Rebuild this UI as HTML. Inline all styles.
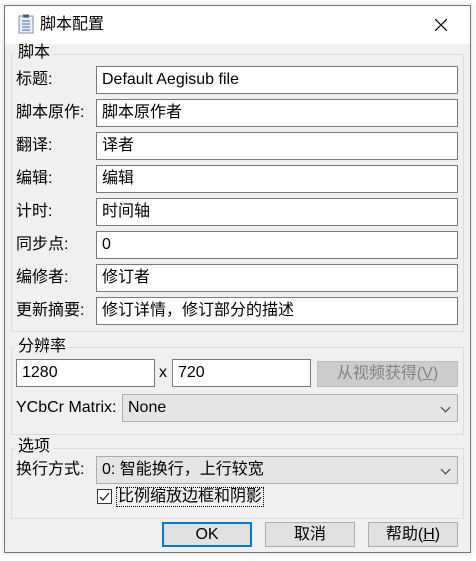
<!DOCTYPE html>
<html><head><meta charset="utf-8"><style>
*{box-sizing:border-box;margin:0;padding:0}
body{width:476px;height:561px;background:#fff;font-family:"Liberation Sans","Noto Sans CJK SC",sans-serif;font-size:16px;color:#000;position:relative;overflow:hidden}
.win{position:absolute;left:4px;top:5px;width:467px;height:548px;border:1px solid #777;background:#f0f0f0;box-shadow:0 0 6px rgba(0,0,0,.15)}
.title{position:absolute;left:0;top:0;width:465px;height:38px;background:#fff}
.a{position:absolute}
.grp{position:absolute;border:1px solid #dcdcdc}
.gl{position:absolute;background:#f0f0f0;padding:0 3px;line-height:18px}
.in{position:absolute;background:#fff;border:1px solid #7a7a7a;height:28px;line-height:26px;padding-left:5px;white-space:nowrap}
.lb{position:absolute;line-height:20px;white-space:nowrap}
.cb{position:absolute;background:#e5e5e5;border:1px solid #adadad;height:28px;line-height:26px;padding-left:5px}
.cb:after{content:"";position:absolute;right:8px;top:9px;width:6px;height:6px;border-right:1px solid #333;border-bottom:1px solid #333;transform:rotate(45deg)}
.bt{position:absolute;background:#e1e1e1;border:1px solid #adadad;height:25px;line-height:23px;text-align:center}
</style></head><body>
<div class="win">
<div class="title">
<svg class="a" style="left:13px;top:8px" width="16" height="20" viewBox="0 0 16 20"><rect x="1" y="2" width="14" height="17" fill="#e8eef6" stroke="#7f8fa6"/><rect x="5" y="0.5" width="6" height="3" fill="#556" /><g stroke="#4a6fa5"><line x1="4" y1="7" x2="12" y2="7"/><line x1="4" y1="10" x2="12" y2="10"/><line x1="4" y1="13" x2="12" y2="13"/><line x1="4" y1="16" x2="12" y2="16"/></g></svg>
<div class="a" style="left:35px;top:9px;line-height:20px">脚本配置</div>
<svg class="a" style="left:430px;top:13px" width="12" height="12"><path d="M0 0L12 12M12 0L0 12" stroke="#000" stroke-width="1.2"/></svg>
</div>
<div class="grp" style="left:6px;top:48px;width:453px;height:278px"></div>
<div class="gl" style="left:10px;top:38px">脚本</div>
<div class="lb" style="left:11px;top:64px">标题:</div><div class="in" style="left:91px;top:60px;width:362px">Default Aegisub file</div>
<div class="lb" style="left:11px;top:97px">脚本原作:</div><div class="in" style="left:91px;top:93px;width:362px">脚本原作者</div>
<div class="lb" style="left:11px;top:130px">翻译:</div><div class="in" style="left:91px;top:126px;width:362px">译者</div>
<div class="lb" style="left:11px;top:163px">编辑:</div><div class="in" style="left:91px;top:159px;width:362px">编辑</div>
<div class="lb" style="left:11px;top:196px">计时:</div><div class="in" style="left:91px;top:192px;width:362px">时间轴</div>
<div class="lb" style="left:11px;top:229px">同步点:</div><div class="in" style="left:91px;top:225px;width:362px">0</div>
<div class="lb" style="left:11px;top:262px">编修者:</div><div class="in" style="left:91px;top:258px;width:362px">修订者</div>
<div class="lb" style="left:11px;top:295px">更新摘要:</div><div class="in" style="left:91px;top:291px;width:362px">修订详情，修订部分的描述</div>
<div class="grp" style="left:6px;top:341px;width:453px;height:88px"></div>
<div class="gl" style="left:10px;top:332px">分辨率</div>
<div class="in" style="left:11px;top:353px;width:139px">1280</div>
<div class="lb" style="left:154px;top:357px">x</div>
<div class="in" style="left:167px;top:353px;width:139px">720</div>
<div class="bt" style="left:312px;top:355px;width:141px;height:26px;background:#ccc;border-color:#bfbfbf;color:#838383">从视频获得(<u>V</u>)</div>
<div class="lb" style="left:11px;top:392px">YCbCr Matrix:</div>
<div class="cb" style="left:117px;top:388px;width:336px">None</div>
<div class="grp" style="left:6px;top:442px;width:453px;height:71px"></div>
<div class="gl" style="left:10px;top:432px">选项</div>
<div class="lb" style="left:11px;top:454px">换行方式:</div>
<div class="cb" style="left:91px;top:450px;width:362px">0: 智能换行，上行较宽</div>
<div class="a" style="left:92px;top:483px;width:15px;height:15px;background:#fff;border:1px solid #333"><svg width="13" height="13" style="position:absolute;left:0;top:0"><path d="M2 7L5 10L11 3" stroke="#222" stroke-width="1.3" fill="none"/></svg></div>
<div class="lb" style="left:111px;top:481px;border:1px dotted #000;line-height:18px;padding:0 1px">比例缩放边框和阴影</div>
<div class="bt" style="left:157px;top:516px;width:90px;border:2px solid #0078d7;line-height:21px">OK</div>
<div class="bt" style="left:260px;top:516px;width:90px">取消</div>
<div class="bt" style="left:363px;top:516px;width:90px">帮助(<u>H</u>)</div>
</div>
</body></html>
